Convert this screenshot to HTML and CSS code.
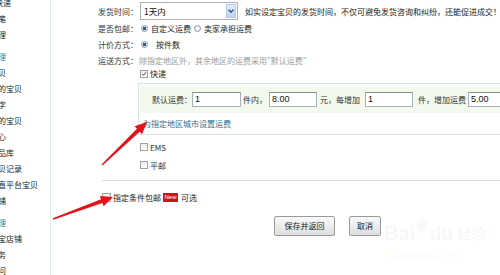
FILE: index.html
```html
<!DOCTYPE html>
<html lang="zh">
<head>
<meta charset="utf-8">
<link rel="stylesheet" href="styles.css">
</head>
<body>
<div class="page">
  <aside class="sidebar">
    <div class="item first">快递</div>
    <div class="item">笔</div>
    <div class="item">理</div>
    <div class="head">理</div>
    <div class="item">贝</div>
    <div class="item">的宝贝</div>
    <div class="item">字</div>
    <div class="item">的宝贝</div>
    <div class="item">心</div>
    <div class="item">品库</div>
    <div class="item">贝记录</div>
    <div class="item">直平台宝贝</div>
    <div class="item">铺</div>
    <div class="head">理</div>
    <div class="item">宝店铺</div>
    <div class="item">务</div>
    <div class="item">问</div>
  </aside>
  <main class="main">
    <div class="row r1">
      <span class="lbl">发货时间：</span>
      <div class="select"><span>1天内</span><span class="sel-btn"><svg width="6" height="4" viewBox="0 0 6 4"><path d="M0.6 0.6 L3 3.2 L5.4 0.6" fill="none" stroke="#2d4f8a" stroke-width="1.4"/></svg></span></div>
      <span class="tip">如实设定宝贝的发货时间，不仅可避免发货咨询和纠纷，还能促进成交！<span class="link">详</span></span>
    </div>
    <div class="row r2">
      <span class="lbl">是否包邮：</span>
      <span class="radio on"></span><span class="opt">自定义运费</span>
      <span class="radio"></span><span class="opt">卖家承担运费</span>
    </div>
    <div class="row r3">
      <span class="lbl">计价方式：</span>
      <span class="radio on"></span><span class="opt wide">按件数</span>
    </div>
    <div class="row r4">
      <span class="lbl">运送方式：</span>
      <span class="hint">除指定地区外，其余地区的运费采用"默认运费"</span>
    </div>
    <div class="row r5">
      <span class="check on"><svg width="8" height="8" viewBox="0 0 8 8"><path d="M1.6 4 L3.3 5.8 L6.5 1.8" fill="none" stroke="#333" stroke-width="1.2"/></svg></span><span class="opt">快递</span>
    </div>
    <div class="box">
      <div class="panel">
        <span>默认运费：</span><span class="input w49">1</span>
        <span class="g2">件内，</span><span class="input g2">8.00</span>
        <span class="g3">元，每增加</span><span class="input g5">1</span>
        <span class="g5">件，增加运费</span><span class="input g2">5.00</span>
      </div>
      <div class="box-link">为指定地区城市设置运费</div>
    </div>
    <div class="row mode first-mode"><span class="check"></span><span class="opt">EMS</span></div>
    <div class="row mode"><span class="check"></span><span class="opt">平邮</span></div>
    <div class="sep"></div>
    <div class="row cond">
      <span class="check big"></span><span class="opt">指定条件包邮</span><span class="badge">New</span><span class="opt g3">可选</span>
    </div>
    <div class="buttons">
      <span class="btn save">保存并返回</span>
      <span class="btn cancel">取消</span>
    </div>
  </main>
</div>

<div class="watermark">
  <div class="wm-logo"><span class="wm-bai">Bai</span><span class="wm-paw">❀</span><span class="wm-du">du</span><span class="wm-jy">经验</span></div>
  <div class="wm-url">jingyan.baidu.com</div>
</div>

<svg class="arrows" width="500" height="275" viewBox="0 0 500 275">
  <polygon fill="#e0141b" points="102.48,165.51 139.70,131.74 142.12,134.27 147,122 134.52,126.31 136.94,128.84 101.52,164.49"/>
  <polygon fill="#e0141b" points="53.24,219.66 102.42,203.01 103.62,206.29 113,197 99.84,195.97 101.04,199.25 52.76,218.34"/>
</svg>
</body>
</html>
```

FILE: styles.css
```css
* { box-sizing: border-box; margin: 0; padding: 0; }
html, body { width: 500px; height: 275px; overflow: hidden; background: #fff; }
body {
  font-family: "Noto Sans CJK SC", "Noto Sans", sans-serif;
  font-size: 8px;
  color: #222;
  position: relative;
}
.page { display: flex; height: 275px; }

.sidebar {
  width: 51px;
  flex: none;
  border-right: 1px solid #dde8ef;
  overflow: hidden;
}
.sidebar .item, .sidebar .head {
  height: 16px;
  line-height: 16px;
  white-space: nowrap;
  margin-left: -2px;
}
.sidebar .first { margin-top: -5px; margin-left: -5px; }
.sidebar .head { color: #2e7b9c; margin-top: 6px; }

.main {
  flex: 1;
  overflow: hidden;
  padding-left: 47px;
  white-space: nowrap;
}
.row { display: flex; align-items: center; white-space: nowrap; }
.lbl { width: 40px; flex: none; text-align: right; color: #333; }

.r1 { margin-top: 2px; height: 18px; }
.select {
  width: 98px; height: 18px; margin-left: 2px; flex: none;
  border: 1px solid #a9b1ba;
  display: flex; align-items: center;
  padding-left: 3px; padding-right: 1px;
  font-size: 8.5px; color: #111;
}
.sel-btn {
  margin-left: auto;
  width: 10px; height: 14px;
  background: linear-gradient(#e4edfc, #bdd1f3);
  border: 1px solid #b7c9e8;
  display: flex; align-items: center; justify-content: center;
}
.tip { margin-left: 7px; color: #222; }
.link { color: #2f6f8f; margin-left: 2px; }

.r2, .r3 { height: 16px; }
.radio {
  width: 7px; height: 7px; flex: none;
  border-radius: 50%;
  border: 1px solid #8d99a5;
  background: radial-gradient(circle, #ffffff 0, #dfe3e8 100%);
  margin-left: 3px;
}
.radio.on { background: radial-gradient(circle, #2b4f86 0, #3c639a 1.4px, #d9dfe6 2px, #f3f5f7 100%); }
.opt { margin-left: 3px; }
.opt.wide { margin-left: 8px; }

.r4 { margin-top: 1px; height: 14px; }
.hint { margin-left: 1px; color: #9a9a9a; }
.r5 { height: 13px; padding-left: 42px; }

.check {
  width: 8px; height: 8px; flex: none;
  border: 1px solid #a3a3a3;
  background: linear-gradient(#ececec, #ffffff);
  display: flex; align-items: center; justify-content: center;
}
.check svg { display: block; }
.r5 .opt, .mode .opt { margin-left: 2px; }

.box {
  margin-top: 3px;
  margin-left: 40px;
  width: 400px;
  border: 1px solid #d8e4ea;
  padding: 2px 0 0 1px;
}
.panel {
  height: 27px;
  background: #f3f9ec;
  padding-left: 12px;
  display: flex; align-items: center;
  color: #333;
}
.input {
  height: 15px; width: 48px; flex: none;
  border: 1px solid #a8b2ba;
  border-top-color: #808b95;
  background: #fff;
  font-family: "Liberation Sans", Arial, sans-serif;
  font-size: 9px; color: #111;
  padding-left: 2px;
  line-height: 13px;
}
.input.w49 { width: 49px; }
.g2 { margin-left: 2px; }
.g3 { margin-left: 3px; }
.g5 { margin-left: 5px; }
.box-link {
  height: 21px; line-height: 21px;
  padding-left: 3px;
  color: #2f6f8f;
}

.mode { height: 18px; padding-left: 42px; }
.first-mode { margin-top: 3px; }
.mode .opt { color: #333; }

.sep {
  margin-top: 6px; margin-left: 4px;
  width: 420px;
  border-top: 1px solid #dcdcdc;
}
.cond { margin-top: 8px; height: 16px; padding-left: 4px; }
.check.big { width: 9px; height: 9px; }
.cond .opt { margin-left: 2px; }
.cond .opt.g3 { margin-left: 3px; }
.badge {
  margin-left: 2px;
  width: 15px; height: 9px;
  background: #c8161d;
  color: #fff;
  font-family: "Liberation Sans", Arial, sans-serif;
  font-size: 6px; line-height: 9px;
  text-align: center;
}

.buttons {
  margin-top: 11px;
  padding-left: 176px;
  display: flex;
  gap: 14px;
}
.btn {
  height: 20px; line-height: 18px;
  border: 1px solid #9b9b9b;
  border-radius: 2px;
  background: linear-gradient(#fafafa, #dedede);
  color: #222;
  text-align: center;
}
.btn.save { width: 61px; }
.btn.cancel { width: 32px; }

.watermark {
  position: absolute;
  left: 384px; top: 214px;
  color: rgba(0, 0, 0, 0.05);
  font-family: "Liberation Sans", Arial, sans-serif;
  pointer-events: none;
}
.wm-logo { display: flex; align-items: flex-end; font-size: 20px; font-weight: bold; line-height: 22px; }
.wm-paw { font-size: 14px; margin: 0 1px 8px; }
.wm-jy { font-family: "Noto Sans CJK SC", sans-serif; font-size: 14px; margin-left: 4px; }
.wm-url { font-size: 9px; margin-top: 6px; margin-left: 2px; }

.arrows { position: absolute; left: 0; top: 0; pointer-events: none; }
```
